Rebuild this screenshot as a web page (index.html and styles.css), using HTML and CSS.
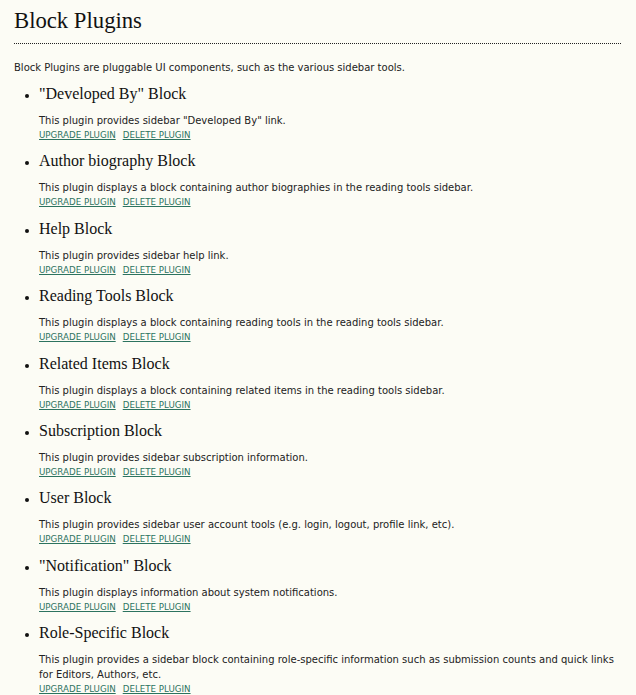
FILE: index.html
```html
<!DOCTYPE html>
<html>
<head>
<meta charset="utf-8">
<link rel="stylesheet" href="styles.css">
</head>
<body>
<div class="page">
  <h2 class="title">Block Plugins</h2>
  <div class="separator"></div>
  <p class="intro">Block Plugins are pluggable UI components, such as the various sidebar tools.</p>
  <ul class="plugins">
    <li class="plugin">
      <h4 class="plugin-name">"Developed By" Block</h4>
      <p class="plugin-desc">This plugin provides sidebar "Developed By" link.</p>
      <p class="plugin-actions"><a href="#">Upgrade Plugin</a><a href="#">Delete Plugin</a></p>
    </li>
    <li class="plugin">
      <h4 class="plugin-name">Author biography Block</h4>
      <p class="plugin-desc">This plugin displays a block containing author biographies in the reading tools sidebar.</p>
      <p class="plugin-actions"><a href="#">Upgrade Plugin</a><a href="#">Delete Plugin</a></p>
    </li>
    <li class="plugin">
      <h4 class="plugin-name">Help Block</h4>
      <p class="plugin-desc">This plugin provides sidebar help link.</p>
      <p class="plugin-actions"><a href="#">Upgrade Plugin</a><a href="#">Delete Plugin</a></p>
    </li>
    <li class="plugin">
      <h4 class="plugin-name">Reading Tools Block</h4>
      <p class="plugin-desc">This plugin displays a block containing reading tools in the reading tools sidebar.</p>
      <p class="plugin-actions"><a href="#">Upgrade Plugin</a><a href="#">Delete Plugin</a></p>
    </li>
    <li class="plugin">
      <h4 class="plugin-name">Related Items Block</h4>
      <p class="plugin-desc">This plugin displays a block containing related items in the reading tools sidebar.</p>
      <p class="plugin-actions"><a href="#">Upgrade Plugin</a><a href="#">Delete Plugin</a></p>
    </li>
    <li class="plugin">
      <h4 class="plugin-name">Subscription Block</h4>
      <p class="plugin-desc">This plugin provides sidebar subscription information.</p>
      <p class="plugin-actions"><a href="#">Upgrade Plugin</a><a href="#">Delete Plugin</a></p>
    </li>
    <li class="plugin">
      <h4 class="plugin-name">User Block</h4>
      <p class="plugin-desc">This plugin provides sidebar user account tools (e.g. login, logout, profile link, etc).</p>
      <p class="plugin-actions"><a href="#">Upgrade Plugin</a><a href="#">Delete Plugin</a></p>
    </li>
    <li class="plugin">
      <h4 class="plugin-name">"Notification" Block</h4>
      <p class="plugin-desc">This plugin displays information about system notifications.</p>
      <p class="plugin-actions"><a href="#">Upgrade Plugin</a><a href="#">Delete Plugin</a></p>
    </li>
    <li class="plugin">
      <h4 class="plugin-name">Role-Specific Block</h4>
      <p class="plugin-desc">This plugin provides a sidebar block containing role-specific information such as submission counts and quick links for Editors, Authors, etc.</p>
      <p class="plugin-actions"><a href="#">Upgrade Plugin</a><a href="#">Delete Plugin</a></p>
    </li>
  </ul>
</div>
</body>
</html>
```
FILE: styles.css
```css
html, body {
  margin: 0;
  padding: 0;
  background: #fcfcf5;
}
body {
  font-family: "DejaVu Sans", Verdana, sans-serif;
  font-size: 10px;
  color: #222;
}
.page {
  padding: 0 15px 0 14px;
}
.title {
  font-family: "Liberation Serif", Georgia, serif;
  font-weight: normal;
  font-size: 22.7px;
  line-height: 26px;
  margin: 0;
  padding-top: 8px;
  color: #111;
}
.separator {
  border-top: 1px dotted #222;
  margin-top: 9px;
}
.intro {
  margin: 16px 0 0;
  line-height: 15px;
}
.plugins {
  list-style: disc;
  margin: 9px 0 0;
  padding-left: 25px;
}
.plugin {
  font-family: "Liberation Serif", Georgia, serif;
  font-size: 16px;
  padding-bottom: 8.4px;
}
.plugin::marker {
  font-size: 12px;
  color: #111;
}
.plugin-name {
  font-family: "Liberation Serif", Georgia, serif;
  font-weight: normal;
  font-size: 16px;
  line-height: 20px;
  margin: 0 0 9px;
  color: #111;
}
.plugin-desc {
  font-family: "DejaVu Sans", Verdana, sans-serif;
  font-size: 10px;
  margin: 0;
  line-height: 15px;
}
.plugin-actions {
  font-family: "DejaVu Sans", Verdana, sans-serif;
  margin: 0;
  line-height: 15px;
  font-size: 8.7px;
}
.plugin-actions a {
  color: #2c735f;
  text-transform: uppercase;
  margin-right: 7px;
}
```
